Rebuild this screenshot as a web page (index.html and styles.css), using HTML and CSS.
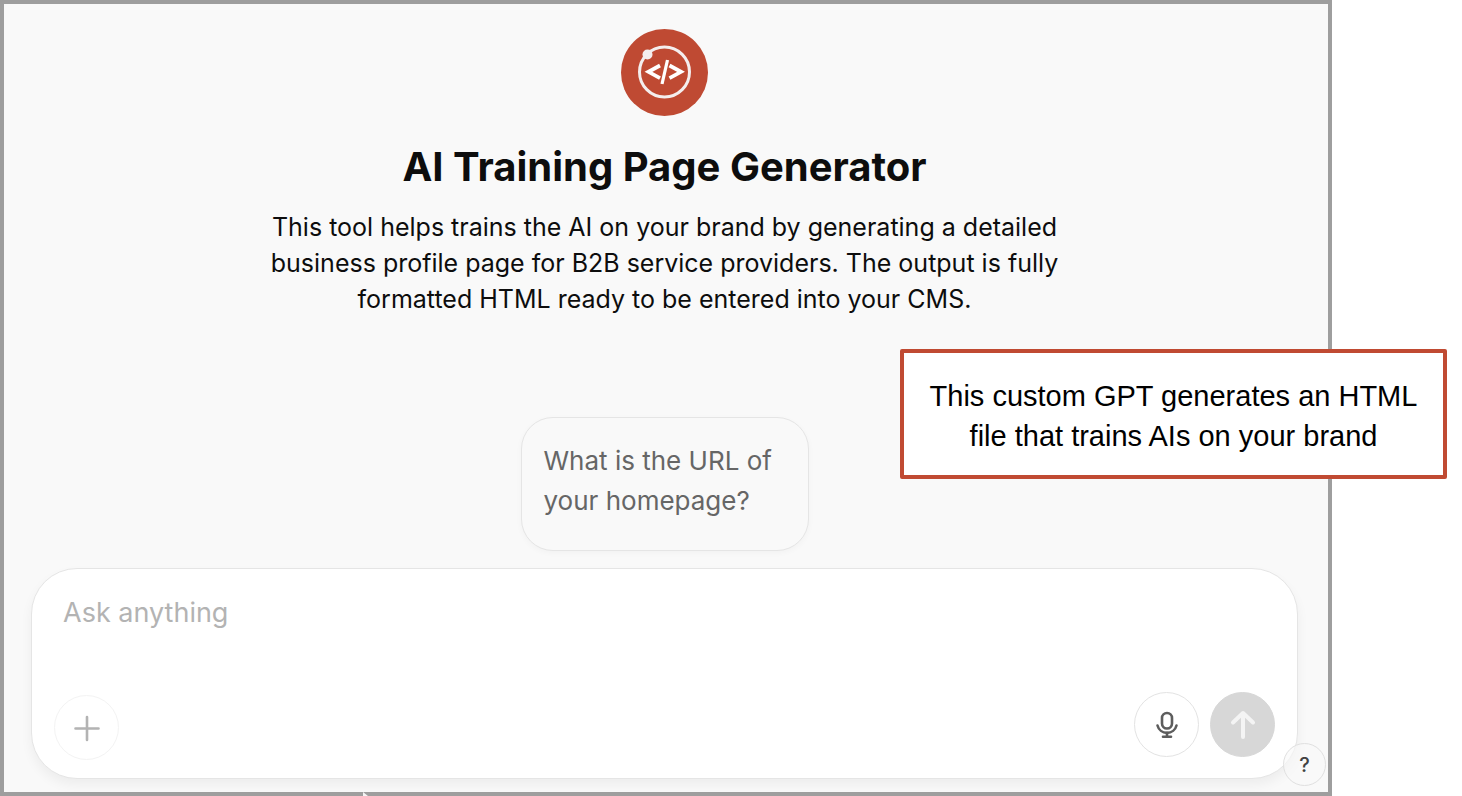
FILE: index.html
```html
<!DOCTYPE html>
<html lang="en">
<head>
<meta charset="utf-8">
<meta name="viewport" content="width=device-width, initial-scale=1">
<title>AI Training Page Generator</title>
<link rel="stylesheet" href="styles.css">
</head>
<body>
<main class="panel">
  <header class="intro">
    <svg class="avatar" viewBox="0 0 87 87" aria-hidden="true">
      <circle cx="43.500" cy="43.500" r="43.500" fill="#bf4a33"/>
      <circle cx="43.500" cy="43" r="25" fill="none" stroke="#f4eeee" stroke-width="3"/>
      <circle cx="26.500" cy="25.500" r="5" fill="#f4eeee"/>
      <path d="M39 36.500L27.500 42.800 39 49.100M48.500 36.500 60 42.800 48.500 49.100" fill="none" stroke="#fff" stroke-width="3.800"/>
      <path d="M46.500 31L41 55" fill="none" stroke="#fff" stroke-width="3.200"/>
    </svg>
    <h1 class="title">AI Training Page Generator</h1>
    <p class="description">This tool helps trains the AI on your brand by generating a detailed business profile page for B2B service providers. The output is fully formatted HTML ready to be entered into your CMS.</p>
  </header>

  <button class="starter" type="button">What is the URL of your homepage?</button>

  <form class="composer">
    <textarea class="prompt" rows="1" aria-label="Message" placeholder="Ask anything"></textarea>
    <div class="actions">
      <button class="round attach" type="button" aria-label="Add files">
        <svg class="icon" viewBox="0 0 32 32"><path d="M16 5v23M4.500 16.500h23"/></svg>
      </button>
      <div class="send-group">
        <button class="round mic" type="button" aria-label="Dictate">
          <svg class="icon" viewBox="0 0 32 32"><rect x="11" y="4" width="10" height="15.500" rx="5"/><path d="M6.500 16.500a9.800 9.800 0 0 0 19 0M16 23.500v4M12 27.700h8"/></svg>
        </button>
        <button class="round send" type="button" aria-label="Send">
          <svg class="icon" viewBox="0 0 32 32"><path d="M16 28V4M6 13.500L16 4l10 9.500"/></svg>
        </button>
      </div>
    </div>
  </form>

  <button class="help" type="button" aria-label="Help">?</button>
  <aside class="callout">This custom GPT generates an HTML file that trains AIs on your brand</aside>
  <svg class="pointer" viewBox="0 0 8 4" aria-hidden="true"><path d="M1 0l5 4H1z" fill="#f4f4f4"/></svg>
</main>
</body>
</html>
```

FILE: styles.css
```css
* {
  box-sizing: border-box;
}

body {
  margin: 0;
  background: #fff;
  color: #0d0d0d;
  font-family: Inter, "Liberation Sans", sans-serif;
}

button,
textarea {
  font: inherit;
  color: inherit;
}

.panel {
  position: relative;
  display: flex;
  flex-direction: column;
  align-items: center;
  min-height: 100vh;
  margin-right: 130px;
  padding: 25px 30px 13px 27px;
  border: 4px solid #9e9e9e;
  background: #f9f9f9;
}

.intro {
  display: flex;
  flex-direction: column;
  align-items: center;
  margin-bottom: 100px;
  text-align: center;
}

.avatar {
  width: 87px;
  height: 87px;
}

.title {
  margin: 25px 0 16px;
  font-size: 40px;
  font-weight: 650;
  line-height: 52px;
}

.description {
  max-width: 800px;
  margin: 0;
  font-size: 25px;
  line-height: 36px;
}

.starter {
  width: 288px;
  margin-bottom: 17px;
  padding: 23px 22px 29px;
  border: 1px solid #e5e5e5;
  border-radius: 32px;
  background: #f9f9f9;
  box-shadow: 0 2px 6px rgba(0, 0, 0, 0.03);
  color: #666;
  font-size: 26px;
  line-height: 40px;
  text-align: left;
}

.composer {
  display: flex;
  flex: 1;
  flex-direction: column;
  justify-content: space-between;
  align-self: stretch;
  padding: 24px 22px 18px;
  border: 1px solid #e5e5e5;
  border-radius: 46px;
  background: #fff;
  box-shadow: 0 6px 12px rgba(0, 0, 0, 0.05);
}

.prompt {
  height: 40px;
  padding: 0 9px;
  border: 0;
  outline: 0;
  background: transparent;
  font-size: 27px;
  line-height: 40px;
  resize: none;
}

.prompt::placeholder {
  color: #b3b3b3;
}

.actions,
.send-group {
  display: flex;
}

.actions {
  align-items: flex-end;
  justify-content: space-between;
}

.send-group {
  gap: 11px;
  padding-bottom: 3px;
}

.round {
  display: grid;
  place-items: center;
  width: 65px;
  height: 65px;
  padding: 0;
  border: 1px solid #e3e3e3;
  border-radius: 50%;
  background: #fff;
}

.icon {
  width: 32px;
  height: 32px;
  fill: none;
  stroke: currentColor;
  stroke-width: 2.6;
  stroke-linecap: round;
  stroke-linejoin: round;
}

.attach {
  border-color: #f3f3f3;
  color: #b3b3b3;
}

.mic {
  color: #5d5d5d;
}

.send {
  border-color: #d7d7d7;
  background: #d7d7d7;
  color: #f4f4f4;
}

.send .icon {
  stroke-width: 4;
}

.help {
  position: absolute;
  right: 2px;
  bottom: 6px;
  width: 43px;
  height: 43px;
  padding: 0;
  border: 1px solid #e0e0e0;
  border-radius: 50%;
  background: rgba(249, 249, 249, 0.6);
  color: #424242;
  font-size: 20px;
  font-weight: 500;
}

.callout {
  position: absolute;
  top: 345px;
  right: -119px;
  width: 547px;
  padding: 23px 20px 19px;
  border: 4px solid #c04a32;
  border-radius: 2px;
  background: #fff;
  color: #000;
  font-family: "Liberation Sans", Arial, sans-serif;
  font-size: 29px;
  line-height: 40px;
  text-align: center;
}

.pointer {
  position: absolute;
  bottom: -4px;
  left: 358px;
  width: 8px;
  height: 4px;
}
```
